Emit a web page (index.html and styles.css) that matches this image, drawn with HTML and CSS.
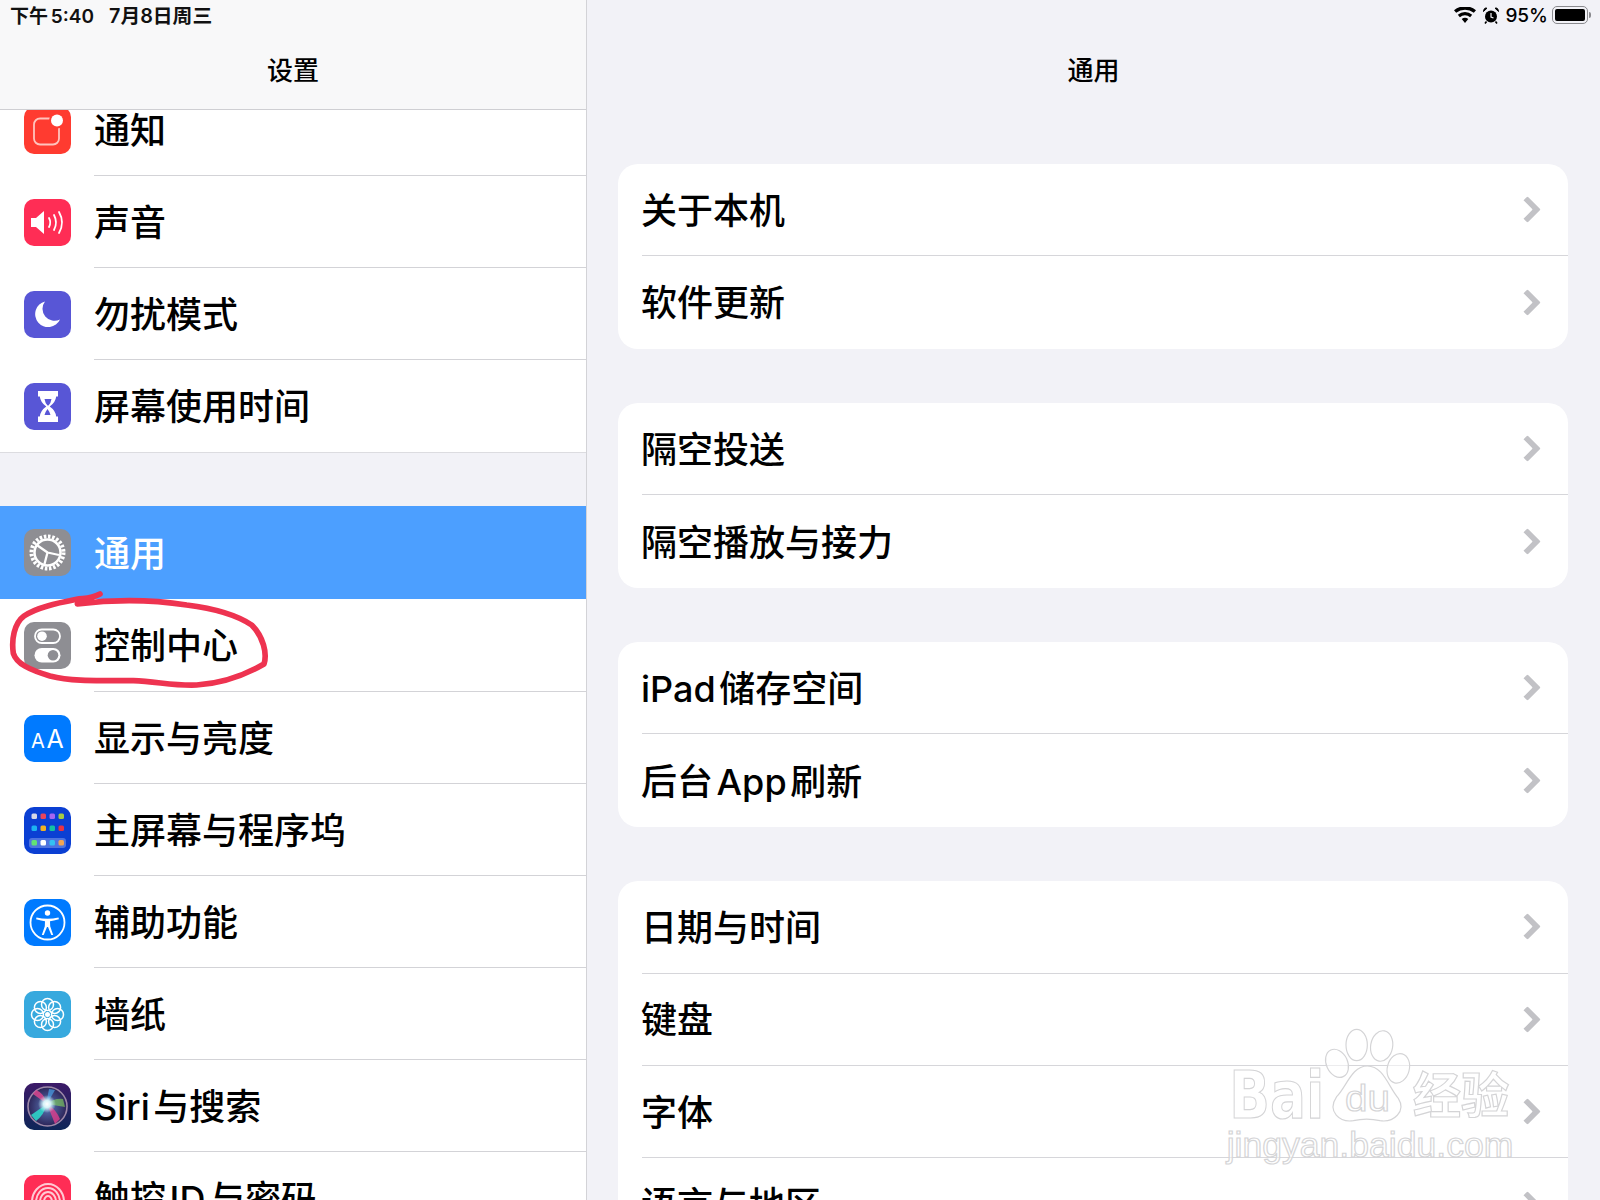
FILE: index.html
```html
<!DOCTYPE html>
<html lang="zh-CN">
<head>
  <meta charset="UTF-8" />
  <title>设置 - 通用</title>
  <link rel="stylesheet" href="styles.css">
</head>
<body>

  <div id="ipad-screen">

    <!-- LEFT: settings list -->
    <aside class="sidebar">
      <header class="side-header">
        <div class="status-left">
          <span class="status-time">下午 5:40</span>
          <span class="status-date">7月8日周三</span>
        </div>
        <div class="nav-title">设置</div>
      </header>

      <div class="side-scroll">
        <div class="side-group">
          <div class="side-row">
            <svg class="app-icon" viewBox="0 0 47 47"><rect width="47" height="47" rx="10" fill="#ff3b30"/><rect x="10" y="11.5" width="25" height="26" rx="6" fill="none" stroke="#ffc4bd" stroke-width="1.8"/><circle cx="33" cy="13.5" r="8" fill="#ff3b30"/><circle cx="33" cy="13.5" r="6" fill="#fff"/></svg>
            <div class="side-label">通知</div>
          </div>
          <div class="side-row">
            <svg class="app-icon" viewBox="0 0 47 47"><rect width="47" height="47" rx="10" fill="#ff2d55"/><path d="M7 19h5l8-7v23l-8-7H7z" fill="#fff"/><path d="M25 19q2.500 4.500 0 9M30 16q4 7.500 0 15M35 13q6 10.500 0 21" fill="none" stroke="#fff" stroke-width="1.800" stroke-linecap="round"/></svg>
            <div class="side-label">声音</div>
          </div>
          <div class="side-row">
            <svg class="app-icon" viewBox="0 0 47 47"><rect width="47" height="47" rx="10" fill="#5856d6"/><path d="M21 10.500A13 13 0 1 0 36 28.500A12 12 0 0 1 21 10.500Z" fill="#fff"/></svg>
            <div class="side-label">勿扰模式</div>
          </div>
          <div class="side-row last">
            <svg class="app-icon" viewBox="0 0 47 47"><rect width="47" height="47" rx="10" fill="#5856d6"/><path d="M14 8h20v5.500h-1.800q-.7 6-6.500 10q5.800 4 6.500 10H34V39H14v-5.500h1.800q.7-6 6.500-10q-5.800-4-6.500-10H14z" fill="#fff"/><path d="M20.500 16h7q-.6 4-3 6.500h-1q-2.400-2.500-3-6.500zM23.500 26q2 2.500 3 6h-6q1-3.500 3-6z" fill="#5856d6"/></svg>
            <div class="side-label">屏幕使用时间</div>
          </div>
        </div>

        <div class="side-gap"></div>

        <div class="side-group">
          <div class="side-row selected">
            <svg class="app-icon" viewBox="0 0 47 47"><rect width="47" height="47" rx="10" fill="#8e8e93"/><circle cx="23.500" cy="23.500" r="16" fill="none" stroke="#fff" stroke-width="4" stroke-dasharray="2.500 1.690"/><circle cx="23.500" cy="23.500" r="13" fill="none" stroke="#fff" stroke-width="2.500"/><path d="M23.500 23.500L13.500 16.500M23.500 23.500L35 26M23.500 23.500L20.500 35" stroke="#fff" stroke-width="2.300"/></svg>
            <div class="side-label">通用</div>
          </div>
          <div class="side-row">
            <svg class="app-icon" viewBox="0 0 47 47"><rect width="47" height="47" rx="10" fill="#8e8e93"/><rect x="11" y="7.500" width="25" height="13.500" rx="6.750" fill="none" stroke="#fff" stroke-width="1.800"/><circle cx="18" cy="14.200" r="4.800" fill="#fff"/><rect x="10.500" y="26" width="26" height="14.500" rx="7.250" fill="#fff"/><circle cx="29" cy="33.200" r="5.300" fill="#8e8e93"/></svg>
            <div class="side-label">控制中心</div>
          </div>
          <div class="side-row">
            <svg class="app-icon" viewBox="0 0 47 47"><rect width="47" height="47" rx="10" fill="#007aff"/><text x="7" y="32.500" class="icon-text" font-size="20">A</text><text x="22.500" y="32.500" class="icon-text" font-size="25">A</text></svg>
            <div class="side-label">显示与亮度</div>
          </div>
          <div class="side-row">
            <svg class="app-icon" viewBox="0 0 47 47"><rect width="47" height="47" rx="10" fill="#0b3fd3"/><rect x="5" y="31" width="37" height="10" rx="3" fill="#fff" fill-opacity=".28"/>
              <rect x="7.500" y="6.500" width="5.500" height="5.500" rx="1.500" fill="#d5d8e6"/><rect x="16.500" y="6.500" width="5.500" height="5.500" rx="1.500" fill="#e8455c"/><rect x="25.500" y="6.500" width="5.500" height="5.500" rx="1.500" fill="#a566f2"/><rect x="34.500" y="6.500" width="5.500" height="5.500" rx="1.500" fill="#a5cc45"/>
              <rect x="7.500" y="18.500" width="5.500" height="5.500" rx="1.500" fill="#1cb3f2"/><rect x="16.500" y="18.500" width="5.500" height="5.500" rx="1.500" fill="#f2b322"/><rect x="25.500" y="18.500" width="5.500" height="5.500" rx="1.500" fill="#12c2a3"/><rect x="34.500" y="18.500" width="5.500" height="5.500" rx="1.500" fill="#e83344"/>
              <rect x="7.500" y="33" width="5.500" height="5.500" rx="1.500" fill="#62e274"/><rect x="16.500" y="33" width="5.500" height="5.500" rx="1.500" fill="#fff"/><rect x="25.500" y="33" width="5.500" height="5.500" rx="1.500" fill="#33c2f2"/><rect x="34.500" y="33" width="5.500" height="5.500" rx="1.500" fill="#f2a553"/></svg>
            <div class="side-label">主屏幕与程序坞</div>
          </div>
          <div class="side-row">
            <svg class="app-icon" viewBox="0 0 47 47"><rect width="47" height="47" rx="10" fill="#007aff"/><circle cx="23.500" cy="23.500" r="17" fill="none" stroke="#fff" stroke-width="1.800"/><circle cx="23.500" cy="14" r="2.700" fill="#fff"/><path d="M12.500 18.500q11 2.500 22 0l.4 1.800q-5.500 1.600-8.900 2l.2 5 3 8.700h-1.900l-3.300-8h-1l-3.300 8h-1.900l3-8.700.2-5q-3.400-.4-8.900-2z" fill="#fff"/></svg>
            <div class="side-label">辅助功能</div>
          </div>
          <div class="side-row">
            <svg class="app-icon" viewBox="0 0 47 47"><rect width="47" height="47" rx="10" fill="#37a9de"/><g fill="none" stroke="#fff" stroke-width="1.500"><circle cx="23.500" cy="13.500" r="6"/><circle cx="23.500" cy="33.500" r="6"/><circle cx="13.500" cy="23.500" r="6"/><circle cx="33.500" cy="23.500" r="6"/><circle cx="16.400" cy="16.400" r="6"/><circle cx="30.600" cy="16.400" r="6"/><circle cx="16.400" cy="30.600" r="6"/><circle cx="30.600" cy="30.600" r="6"/></g><circle cx="23.500" cy="23.500" r="2.500" fill="#fff"/></svg>
            <div class="side-label">墙纸</div>
          </div>
          <div class="side-row">
            <svg class="app-icon" viewBox="0 0 47 47">
              <defs>
                <linearGradient id="siri-bg" x1="0" y1="0" x2="0" y2="1"><stop offset="0" stop-color="#3c1a68"/><stop offset="1" stop-color="#0e2658"/></linearGradient>
                <radialGradient id="siri-disc"><stop offset="0" stop-color="#5a78b8"/><stop offset="1" stop-color="#2c2458"/></radialGradient>
                <radialGradient id="siri-glow"><stop offset="0" stop-color="#fff"/><stop offset=".4" stop-color="#d5f2f8"/><stop offset="1" stop-color="#bfe8f5" stop-opacity="0"/></radialGradient>
              </defs>
              <rect width="47" height="47" rx="10" fill="url(#siri-bg)"/>
              <circle cx="23.500" cy="23.500" r="19.500" fill="url(#siri-disc)" stroke="#9c88a8" stroke-width="1.600"/>
              <path d="M23 21L9 11L12 7Q20 10 23 21z" fill="#d9478f" fill-opacity=".85"/>
              <path d="M23 21L41 24L39 16Q30 15 23 21z" fill="#86d95c" fill-opacity=".6"/>
              <path d="M23 21L7 32L12 38Q20 32 23 21z" fill="#2dd4c8" fill-opacity=".9"/>
              <path d="M23 21L31 41L36 36Q32 26 23 21z" fill="#e0408f" fill-opacity=".8"/>
              <path d="M23 21L31 7L25 6Q23 14 23 21z" fill="#4aa3e8" fill-opacity=".7"/>
              <circle cx="23" cy="21" r="9" fill="url(#siri-glow)"/>
            </svg>
            <div class="side-label">Siri 与搜索</div>
          </div>
          <div class="side-row">
            <svg class="app-icon" viewBox="0 0 47 47"><rect width="47" height="47" rx="10" fill="#ff2d55"/><g fill="none" stroke="#fff" stroke-opacity=".75" stroke-width="2"><ellipse cx="24" cy="27" rx="4" ry="6"/><ellipse cx="24" cy="27" rx="8" ry="10"/><ellipse cx="24" cy="27" rx="12" ry="14"/><ellipse cx="24" cy="27" rx="16" ry="18"/></g></svg>
            <div class="side-label">触控 ID 与密码</div>
          </div>
        </div>
      </div>

      <!-- hand drawn circle round the control centre row -->
      <svg class="scribble" viewBox="0 0 900 300"><path d="M300 12C270 28 250 24 230 28C170 40 110 52 72 78C42 100 34 150 40 190C50 222 90 240 150 258C230 278 320 270 400 272C470 274 520 288 590 285C670 280 740 252 792 222C802 190 790 140 755 105C710 75 640 55 560 45C450 28 340 28 232 42" fill="none" stroke="#ee3350" stroke-width="17" stroke-linecap="round" stroke-linejoin="round"/></svg>
    </aside>

    <!-- RIGHT: general pane -->
    <main class="detail">
      <header class="detail-header">
        <div class="status-right">
          <svg class="wifi" viewBox="0 0 22 16"><path d="M11 16l-3.300-3.900a5 5 0 0 1 6.600 0zM5.900 10.200l-2.100-2.500a11 11 0 0 1 14.400 0l-2.100 2.500a8 8 0 0 0-10.200 0zM2.200 5.800L0 3.300a17 17 0 0 1 22 0l-2.200 2.500a14 14 0 0 0-17.600 0z" fill="#000"/></svg>
          <svg class="alarm" viewBox="0 0 16 17"><circle cx="8" cy="9.500" r="6" fill="#000"/><path d="M8 6v4l2.500 1" fill="none" stroke="#f2f2f7" stroke-width="1.200"/><path d="M.5 4.500L4 1.200Q1 .2.500 4.500zM15.500 4.500L12 1.200Q15 .2 15.500 4.500z" fill="#000" stroke="#000"/><path d="M3.500 14.500l-1.500 2M12.500 14.500l1.500 2" stroke="#000" stroke-width="1.600"/></svg>
          <span class="battery-pct">95%</span>
          <div class="battery"><div class="battery-fill"></div></div>
          <div class="battery-nub"></div>
        </div>
        <div class="nav-title">通用</div>
      </header>

      <div class="detail-scroll">
        <section class="card">
          <div class="card-row"><span class="card-label">关于本机</span><i class="chev"></i></div>
          <div class="card-row"><span class="card-label">软件更新</span><i class="chev"></i></div>
        </section>
        <section class="card">
          <div class="card-row"><span class="card-label">隔空投送</span><i class="chev"></i></div>
          <div class="card-row"><span class="card-label">隔空播放与接力</span><i class="chev"></i></div>
        </section>
        <section class="card">
          <div class="card-row"><span class="card-label">iPad 储存空间</span><i class="chev"></i></div>
          <div class="card-row"><span class="card-label">后台 App 刷新</span><i class="chev"></i></div>
        </section>
        <section class="card">
          <div class="card-row"><span class="card-label">日期与时间</span><i class="chev"></i></div>
          <div class="card-row"><span class="card-label">键盘</span><i class="chev"></i></div>
          <div class="card-row"><span class="card-label">字体</span><i class="chev"></i></div>
          <div class="card-row"><span class="card-label">语言与地区</span><i class="chev"></i></div>
        </section>
      </div>

      <!-- image host watermark -->
      <svg class="watermark" viewBox="0 0 1260 600">
        <g class="wm-shape">
          <text x="148" y="354" class="wm-big" textLength="285" lengthAdjust="spacingAndGlyphs">Bai</text>
          <ellipse cx="471" cy="190" rx="32" ry="44" transform="rotate(-25 471 190)"/>
          <ellipse cx="530" cy="135" rx="32" ry="47"/>
          <ellipse cx="605" cy="138" rx="33" ry="46" transform="rotate(10 605 138)"/>
          <ellipse cx="655" cy="205" rx="33" ry="45" transform="rotate(15 655 205)"/>
          <path d="M562 198C610 198 625 260 655 295C680 335 640 368 600 362C570 355 550 355 520 362C480 368 440 335 470 290C500 260 515 198 562 198Z"/>
          <text x="495" y="332" class="wm-mid" textLength="135" lengthAdjust="spacingAndGlyphs">du</text>
          <text x="698" y="340" class="wm-cn" textLength="290" lengthAdjust="spacingAndGlyphs">经验</text>
          <text x="140" y="470" class="wm-small" textLength="860" lengthAdjust="spacingAndGlyphs">jingyan.baidu.com</text>
        </g>
      </svg>
    </main>

  </div>

</body>
</html>
```

FILE: styles.css
```css
/* Page: one fixed iPad screen */
body {
  margin: 0;
  background: #f2f2f7;
  font-family: 'Inter', 'Noto Sans CJK SC', sans-serif;
  font-weight: 500;
  color: #000;
}

#ipad-screen {
  display: flex;
  width: 1600px;
  height: 1200px;
  overflow: hidden;
  position: relative;
}

/* Left column */
.sidebar {
  width: 586px;
  flex-shrink: 0;
  display: flex;
  flex-direction: column;
  border-right: 1px solid #d3d3d7;
  background: #f2f2f7;
}

.side-header {
  height: 110px;
  flex-shrink: 0;
  box-sizing: border-box;
  background: #f8f8f9;
  border-bottom: 1px solid #cfcfd3;
  position: relative;
  z-index: 1;
}

.status-left {
  display: flex;
  gap: 15px;
  height: 28px;
  align-items: center;
  padding-left: 10px;
  font-size: 19px;
  font-weight: 600;
  color: #111;
}

.status-time {
  word-spacing: -2px;
}

.status-date {
  font-size: 19.8px;
}

.status-left + .nav-title {
  margin-top: 18px;
}

.nav-title {
  height: 50px;
  margin-top: 16px;
  line-height: 50px;
  text-align: center;
  font-size: 26px;
  font-weight: 500;
}

.side-scroll {
  flex: 1;
  overflow: hidden;
}

.side-group:first-child {
  margin-top: -26px;
}

.side-group {
  background: #fff;
}

.side-gap {
  height: 53px;
}

.side-row {
  display: flex;
  align-items: center;
  height: 92px;
  padding-left: 24px;
}

/* last row of the first group has a full width line */
.side-row.last {
  height: 93px;
  box-sizing: border-box;
  border-bottom: 1px solid #dcdce0;
}

.side-row.last .side-label {
  border-bottom: none;
}

.app-icon {
  width: 47px;
  height: 47px;
  flex-shrink: 0;
  margin-right: 23px;
}

.icon-text {
  fill: #fff;
  font-family: 'Inter', sans-serif;
  font-weight: 400;
}

.side-label {
  flex: 1;
  height: 92px;
  box-sizing: border-box;
  line-height: 94px;
  font-size: 36px;
  word-spacing: -6px;
  border-bottom: 1px solid #d3d3d7;
}

.side-row.selected {
  height: 93px;
  background: #4c9fff;
  color: #fff;
}

.side-row.selected .side-label {
  border-bottom: none;
}

.side-row.selected + .side-row {
  height: 93px;
}

.side-row.selected + .side-row .side-label {
  height: 93px;
}

/* Marker drawn over the list */
.scribble {
  position: absolute;
  left: 0;
  top: 590px;
  width: 300px;
  height: 100px;
  z-index: 2;
}

/* Right column */
.detail {
  flex: 1;
  display: flex;
  flex-direction: column;
}

.detail-header {
  height: 109px;
  flex-shrink: 0;
}

.status-right {
  display: flex;
  align-items: center;
  justify-content: flex-end;
  height: 30px;
  padding-right: 9px;
  font-size: 19px;
  font-weight: 500;
}

.wifi {
  width: 22px;
  height: 16px;
  margin-right: 7px;
}

.alarm {
  width: 16px;
  height: 17px;
  margin-right: 6px;
}

.battery-pct {
  margin-right: 4px;
}

.battery {
  width: 36px;
  height: 18px;
  box-sizing: border-box;
  border: 1.5px solid #8a8a8e;
  border-radius: 5px;
  padding: 2px;
}

.battery-fill {
  height: 100%;
  background: #000;
  border-radius: 2px;
}

.battery-nub {
  width: 2px;
  height: 6px;
  margin-left: 1px;
  background: #8a8a8e;
  border-radius: 0 2px 2px 0;
}

.detail-scroll {
  padding: 55px 32px 0 31px;
}

.card {
  background: #fff;
  border-radius: 20px;
  margin-bottom: 54.5px;
  padding-left: 24px;
}

.card-row {
  display: flex;
  align-items: center;
  justify-content: space-between;
  height: 92.3px;
  box-sizing: border-box;
  padding-right: 31px;
  border-bottom: 1px solid #d6d6da;
  font-size: 36px;
  word-spacing: -6px;
}

.card-row:last-child {
  border-bottom: none;
}

.card-label {
  margin-left: -1px;
  padding-bottom: 4px;
}

.chev {
  width: 19px;
  height: 19px;
  box-sizing: border-box;
  border-top: 6px solid #c2c2c6;
  border-right: 6px solid #c2c2c6;
  border-radius: 2px;
  transform: rotate(45deg);
}

/* Watermark over the bottom right corner */
.watermark {
  position: absolute;
  left: 1180px;
  top: 1000px;
  width: 420px;
  height: 200px;
  z-index: 2;
}

.wm-shape > * {
  fill: #fff;
  fill-opacity: .55;
  stroke: #d4d4d6;
  stroke-width: 3.500;
}

.wm-big {
  font-family: 'DejaVu Sans', sans-serif;
  font-weight: bold;
  font-size: 198px;
}

.wm-mid {
  font-family: 'Liberation Sans', sans-serif;
  font-size: 110px;
}

.wm-cn {
  font-family: 'Noto Sans CJK SC', sans-serif;
  font-weight: bold;
  font-size: 145px;
}

.wm-small {
  font-family: 'Liberation Sans', sans-serif;
  font-size: 105px;
}
```
